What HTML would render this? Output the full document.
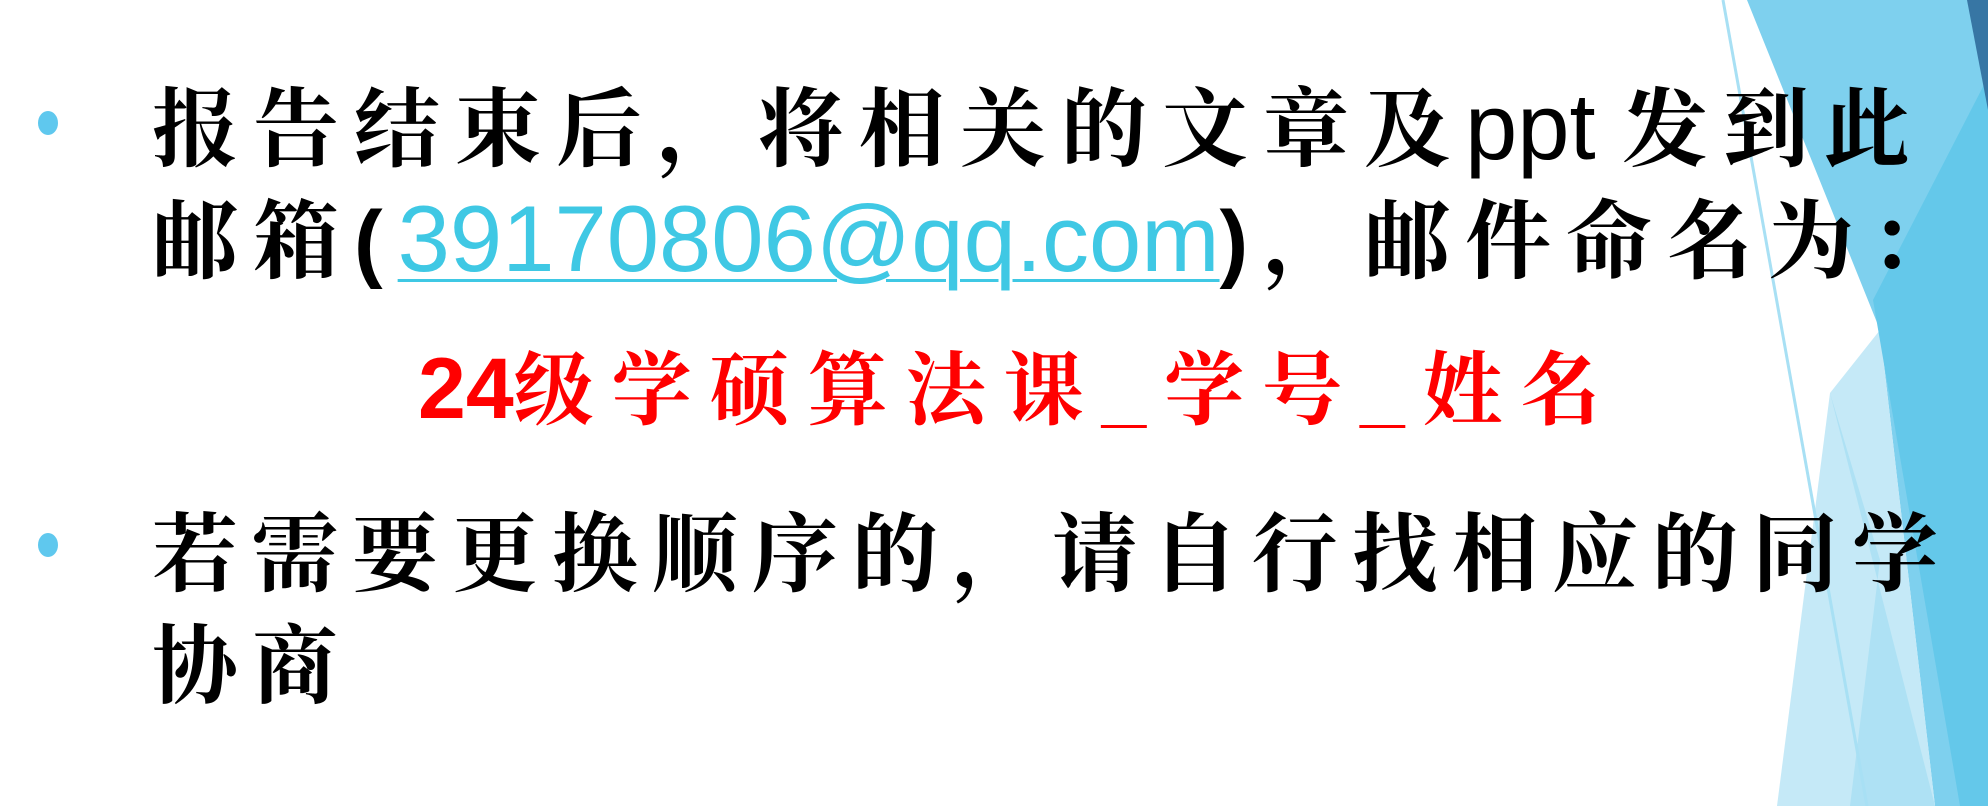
<!DOCTYPE html>
<html><head><meta charset="utf-8"><style>
html,body{margin:0;padding:0;background:#fff;width:1988px;height:806px;overflow:hidden;position:relative}
.t{position:absolute;white-space:nowrap;font-family:"Liberation Sans","Noto Serif CJK SC","Noto Sans CJK SC",serif;font-weight:bold;color:#000;font-size:86px;line-height:1;letter-spacing:15px}
.b{position:absolute;width:20px;height:24px;border-radius:50%;background:#5fc8ee}
.em{font-family:"Liberation Sans",sans-serif;font-weight:normal;color:#3fc8e4;font-size:94px;letter-spacing:0;text-decoration:underline;text-decoration-thickness:3px;text-underline-offset:8px}
.p{font-family:"Liberation Sans",sans-serif;font-weight:normal;letter-spacing:0;font-size:94px}
</style></head><body>
<svg style="position:absolute;left:0;top:0" width="1988" height="806">
<polygon points="1747,0 1988,0 1988,806 1935,806 1880,330" fill="#7ed0ee"/>
<polygon points="1830,393 1880,330 1935,806 1777,806" fill="#c5e9f7"/>
<polygon points="1873,300 1988,77 1988,806 1960,806" fill="#64c8ea"/>
<polygon points="1830,393 1880,560 1850,806 1935,806" fill="#aee1f4"/>
<polygon points="1967,0 1988,0 1988,110" fill="#3776a4"/>
<line x1="1723" y1="0" x2="1867" y2="806" stroke="#a8e0f4" stroke-width="3"/>
</svg>
<div class="b" style="left:38px;top:111px"></div>
<div class="b" style="left:38px;top:533px"></div>
<div class="t" style="left:152px;top:80px">报告结束后，将相关的文章及<span class="p">ppt </span>发到此</div>
<div class="t" style="left:152px;top:192px">邮箱(<span class="em">39170806@qq.com</span>)，邮件命名为：</div>
<div class="t" style="left:418px;top:346px;color:#ff0000;font-size:80px;letter-spacing:18px"><span class="p" style="font-size:86px;font-weight:bold">24</span>级学硕算法课_学号_姓名</div>
<div class="t" style="left:152px;top:512px;letter-spacing:14px">若需要更换顺序的，请自行找相应的同学</div>
<div class="t" style="left:152px;top:624px;letter-spacing:14px">协商</div>
</body></html>
